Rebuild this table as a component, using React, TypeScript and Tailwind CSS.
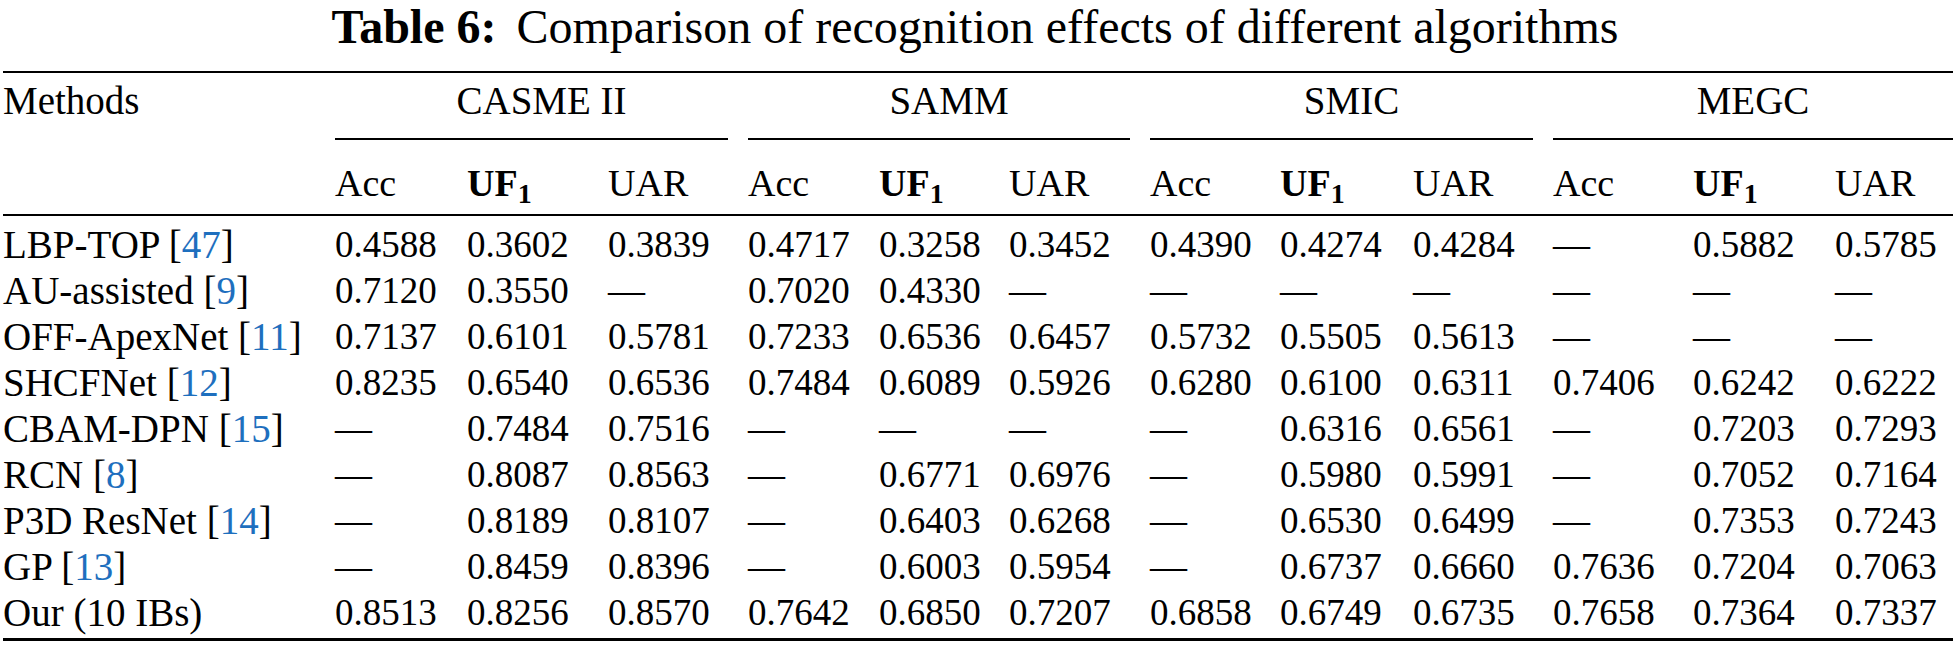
const cols =
  "grid grid-cols-[332px_132px_141px_140px_131px_130px_141px_130px_133px_140px_140px_142px_118px]";

const groups = ["CASME II", "SAMM", "SMIC", "MEGC"];

const rows: { name: string; cite: string; vals: string[] }[] = [
  {
    name: "LBP-TOP",
    cite: "47",
    vals: ["0.4588", "0.3602", "0.3839", "0.4717", "0.3258", "0.3452", "0.4390", "0.4274", "0.4284", "—", "0.5882", "0.5785"],
  },
  {
    name: "AU-assisted",
    cite: "9",
    vals: ["0.7120", "0.3550", "—", "0.7020", "0.4330", "—", "—", "—", "—", "—", "—", "—"],
  },
  {
    name: "OFF-ApexNet",
    cite: "11",
    vals: ["0.7137", "0.6101", "0.5781", "0.7233", "0.6536", "0.6457", "0.5732", "0.5505", "0.5613", "—", "—", "—"],
  },
  {
    name: "SHCFNet",
    cite: "12",
    vals: ["0.8235", "0.6540", "0.6536", "0.7484", "0.6089", "0.5926", "0.6280", "0.6100", "0.6311", "0.7406", "0.6242", "0.6222"],
  },
  {
    name: "CBAM-DPN",
    cite: "15",
    vals: ["—", "0.7484", "0.7516", "—", "—", "—", "—", "0.6316", "0.6561", "—", "0.7203", "0.7293"],
  },
  {
    name: "RCN",
    cite: "8",
    vals: ["—", "0.8087", "0.8563", "—", "0.6771", "0.6976", "—", "0.5980", "0.5991", "—", "0.7052", "0.7164"],
  },
  {
    name: "P3D ResNet",
    cite: "14",
    vals: ["—", "0.8189", "0.8107", "—", "0.6403", "0.6268", "—", "0.6530", "0.6499", "—", "0.7353", "0.7243"],
  },
  {
    name: "GP",
    cite: "13",
    vals: ["—", "0.8459", "0.8396", "—", "0.6003", "0.5954", "—", "0.6737", "0.6660", "0.7636", "0.7204", "0.7063"],
  },
  {
    name: "Our (10 IBs)",
    cite: "",
    vals: ["0.8513", "0.8256", "0.8570", "0.7642", "0.6850", "0.7207", "0.6858", "0.6749", "0.6735", "0.7658", "0.7364", "0.7337"],
  },
];

function UF1() {
  return (
    <span className="font-bold">
      UF<span className="relative top-[7px] text-[28px] leading-none">1</span>
    </span>
  );
}

export default function App() {
  return (
    <div className="w-[1958px] h-[646px] bg-white text-black font-['Liberation_Serif','Times_New_Roman',serif] text-[37px] leading-[46px] overflow-hidden">
      {/* Caption */}
      <div className="pr-[8px] text-center text-[48px] leading-[54px] whitespace-nowrap">
        <span className="font-bold">Table 6:</span>
        <span className="ml-[20px]">Comparison of recognition effects of different algorithms</span>
      </div>

      <div className="mx-[3px] mt-[17px] w-[1950px]">
        <div className="h-[2px] bg-black" />

        {/* Group header */}
        <div className={`${cols} pt-[5px] text-[39px]`}>
          <div>Methods</div>
          {groups.map((g) => (
            <div key={g} className="col-span-3 text-center">
              {g}
            </div>
          ))}
        </div>

        {/* cmidrules */}
        <div className={`${cols} mt-[14px]`}>
          <div />
          {groups.map((g, i) => (
            <div key={g} className="col-span-3">
              <div className={`h-[2px] bg-black ${i < 3 ? "mr-[20px]" : ""}`} />
            </div>
          ))}
        </div>

        {/* Metric header */}
        <div className={`${cols} mt-[20px] text-[38px]`}>
          <div />
          {groups.map((g) => (
            <div key={g} className="contents">
              <div>Acc</div>
              <div>
                <UF1 />
              </div>
              <div>UAR</div>
            </div>
          ))}
        </div>

        <div className="h-[2px] bg-black mt-[8px]" />

        {/* Body */}
        <div className="mt-[6px]">
          {rows.map((r) => (
            <div key={r.name} className={`${cols} whitespace-nowrap`}>
              <div className="text-[39px]">
                {r.name}
                {r.cite && (
                  <>
                    {" "}[<span className="text-[#1e6fbe]">{r.cite}</span>]
                  </>
                )}
              </div>
              {r.vals.map((v, i) => (
                <div key={i}>{v}</div>
              ))}
            </div>
          ))}
        </div>

        <div className="h-[3px] bg-black mt-[2px]" />
      </div>
    </div>
  );
}
